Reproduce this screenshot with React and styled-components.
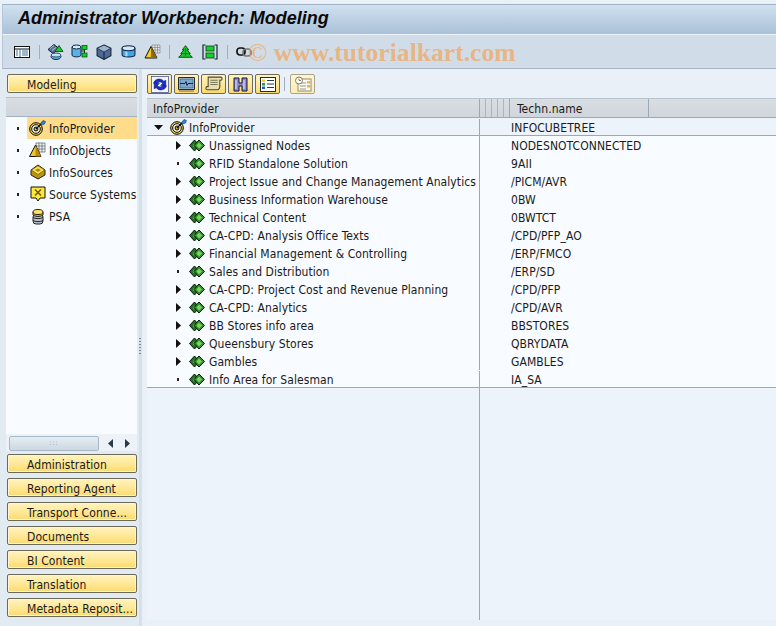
import React from 'react';
import styled, { createGlobalStyle } from 'styled-components';

const UI_FONT = '"DejaVu Sans Condensed", "Noto Sans", sans-serif';

const Global = createGlobalStyle`
  html, body { margin: 0; padding: 0; background: #e9f0f7; }
  body { font-family: ${UI_FONT}; overflow: hidden; letter-spacing: .07px; }
  * { box-sizing: border-box; }
`;

const Page = styled.div`
  position: relative; width: 776px; height: 626px; overflow: hidden;
  display: flex; flex-direction: column; padding-top: 4px; background: #e9f0f7;
`;
const TitleBar = styled.div`
  height: 31px; flex: none; display: flex; align-items: center; padding: 0 0 2px 15px;
  margin-left: 2px;
  border-top: 1px solid #9fb1c4; border-left: 1px solid #b6c6d6; border-bottom: 1px solid #eef4fa;
  background: linear-gradient(#d0e1ef, #aac1d9);
`;
const Title = styled.h1`
  margin: 0; font: italic bold 18px "Liberation Sans", Arial, sans-serif; letter-spacing: 0; color: #0a0a0a;
`;
const MainToolbar = styled.div`
  height: 34px; flex: none; display: flex; align-items: center; padding-left: 10px;
  margin-left: 2px; background: #d0dde8; border-bottom: 1px solid #a3b2c4; border-left: 1px solid #b6c6d6;
`;
const ToolSlot = styled.span`
  width: ${p => p.$w || 24}px; height: 18px; display: flex; align-items: center; justify-content: center; flex: none;
`;
const Sep = styled.span`
  width: 1px; height: 14px; background: #9fb0c2; flex: none;
  margin-left: ${p => p.$l}px; margin-right: ${p => p.$r}px;
`;
const Watermark = styled.div`
  position: absolute; left: 248px; top: 38px; font: bold 25.6px "Liberation Serif", serif; letter-spacing: 0;
  color: #e8b584; white-space: nowrap; pointer-events: none;
`;
const Thin = styled.span`
  font-weight: normal;
`;
const Body = styled.div`
  flex: 1; display: flex; min-height: 0;
`;
const Sidebar = styled.aside`
  width: 140px; flex: none; padding: 5px 3px 9px 7px; display: flex; flex-direction: column;
  background: #e3ebf2;
`;
const NavButton = styled.button`
  height: 19px; width: 130px; flex: none; border: 1px solid #6d6a58; border-radius: 2px; padding: 2px 0 0 19px; margin: 0;
  text-align: left; font: 12px ${UI_FONT}; letter-spacing: .07px; color: #1a1a1a; white-space: nowrap; overflow: hidden;
  background: linear-gradient(#fff3c0, #ffe68f 60%, #fbd971);
  box-shadow: inset 0 0 0 1px #fff6cf;
`;
const NavStack = styled.div`
  display: flex; flex-direction: column; gap: 5px; margin-top: 3px;
`;
const TreeHead = styled.div`
  height: 20px; margin: 4px 0 0 -1px; flex: none; background: linear-gradient(#d9dee3, #cfd5db);
  border-top: 1px solid #b9c3cd; border-bottom: 1px solid #a3b2c4;
`;
const NavTree = styled.ul`
  list-style: none; margin: 0 0 0 -1px; padding: 0; flex: 1; background: #f8fbff;
`;
const NavRow = styled.li`
  height: 22px; display: flex; align-items: center; position: relative; padding-left: 21px;
  font-size: 12px; color: #1a1a1a; white-space: nowrap;
`;
const NavSelect = styled.span`
  display: flex; align-items: center; flex: 1; min-width: 0; height: 22px; padding-left: 2px; gap: 3px;
  background: ${p => p.$on ? '#ffdc8a' : 'transparent'}; overflow: hidden;
`;
const NavIcon = styled.span`
  width: 17px; flex: none; display: flex; align-items: center; justify-content: center;
`;
const Label = styled.span`
  padding-top: 2px;
`;
const Bullet = styled.i`
  position: absolute; width: 2px; height: 3px; background: #222; left: 11px; top: 50%; margin-top: -1px;
`;
const HScroll = styled.div`
  height: 17px; flex: none; margin-left: -1px; display: flex; align-items: flex-end; background: #ecf2f8; padding-left: 3px;
`;
const Thumb = styled.div`
  width: 90px; height: 15px; border: 1px solid #a9b8c6; border-radius: 2px; display: flex; align-items: center; justify-content: center;
  background: linear-gradient(#e6edf3, #ccd8e2); color: #8a97a4; font-size: 7px; letter-spacing: 1px; line-height: 1;
`;
const ArrowBtn = styled.span`
  width: 16px; height: 15px; display: flex; align-items: center; justify-content: center; flex: none;
  &:first-of-type { margin-left: 4px; }
`;
const Splitter = styled.div`
  width: 8px; margin-left: -1px; flex: none; display: flex; align-items: center; background: linear-gradient(to right, #d6e0e9 0 3px, #e9f0f7 3px);
`;
const Grip = styled.div`
  width: 2px; height: 16px; margin-top: -4px; background: repeating-linear-gradient(#7d8b99 0 1px, transparent 1px 3px);
`;
const Content = styled.main`
  flex: 1; min-width: 0; display: flex; flex-direction: column; padding-top: 5px;
`;
const AppToolbar = styled.div`
  height: 20px; flex: none; display: flex; align-items: center; gap: 2px;
`;
const IconButton = styled.button`
  width: 25px; height: 20px; border: 1px solid ${p => p.$off ? '#a9a48e' : '#6d6a58'}; border-radius: 2px; padding: 0; margin: 0;
  display: flex; align-items: center; justify-content: center;
  background: ${p => p.$off ? 'linear-gradient(#fff5cf, #ffedb3)' : 'linear-gradient(#fff3c0, #ffe68f 60%, #fbd971)'};
`;
const Grid = styled.div`
  margin-top: 4px; flex: 1; display: flex; flex-direction: column; margin-bottom: 6px;
  background: linear-gradient(to right, transparent 332px, #9aa8b8 332px, #9aa8b8 333px, transparent 333px), #ecf3fb;
`;
const HeaderRow = styled.div`
  height: 20px; flex: none; display: flex; background: linear-gradient(#d9dee3, #cfd5db);
  border-top: 1px solid #b9c3cd; border-bottom: 1px solid #9aa8b8; font-size: 12px; color: #1a1a1a;
`;
const HeadName = styled.div`
  width: 333px; flex: none; padding: 1px 0 0 6px; line-height: 19px; border-right: 1px solid #9aa8b8;
`;
const HeadGrips = styled.div`
  width: 30px; flex: none; background: repeating-linear-gradient(to right, transparent 0 5px, #aab5c1 5px 6px);
  border-right: 1px solid #9aa8b8;
`;
const HeadTech = styled.div`
  width: 139px; flex: none; padding: 1px 0 0 7px; line-height: 19px; border-right: 1px solid #9aa8b8;
`;
const Row = styled.div`
  height: 18px; flex: none; display: flex; align-items: center; font-size: 12px; color: #1a1a1a; white-space: nowrap;
  background: ${p => p.$root ? '#ecf3fb' : '#f8fbff'};
  border-bottom: ${p => p.$line ? '1px solid #9aa8b8' : 'none'};
  padding-top: ${p => p.$line ? 1 : 0}px;
`;
const NameCell = styled.div`
  width: 333px; flex: none; height: 100%; display: flex; align-items: center;
  padding-left: ${p => p.$root ? 5 : 25}px; border-right: 1px solid #9aa8b8; overflow: hidden;
`;
const Expander = styled.span`
  width: 12px; flex: none; display: flex; align-items: center; justify-content: center;
  margin-right: ${p => p.$root ? 6 : 5}px;
`;
const TreeIcon = styled.span`
  flex: none; display: flex; align-items: center; margin-right: ${p => p.$root ? 2 : 4}px;
`;
const TechCell = styled.div`
  padding: 2px 0 0 31px;
`;

const Right = () => <svg width="5" height="9" viewBox="0 0 5 9"><path d="M0 0l5 4.500L0 9z" fill="#111" /></svg>;
const Down = () => <svg width="9" height="5" viewBox="0 0 9 5"><path d="M0 0h9L4.500 5z" fill="#111" /></svg>;
const Dot = () => <svg width="2" height="3"><rect width="2" height="3" fill="#222" /></svg>;

const Target = () => (
  <svg width="17" height="16" viewBox="0 0 17 16">
    <circle cx="7" cy="9" r="6.300" fill="#f5d84a" stroke="#000" />
    <circle cx="7" cy="9" r="4.300" fill="#fff" stroke="#000" />
    <circle cx="7" cy="9" r="2" fill="#e0b020" stroke="#000" />
    <path d="M7 9L13 3" stroke="#111" strokeWidth="1.300" />
    <path d="M11.500 3.500L14 .5l2.500 1-1 2.500-2.500 1z" fill="#2f7fe0" stroke="#133a78" strokeWidth=".6" />
  </svg>
);
const Diamonds = () => (
  <svg width="16" height="13" viewBox="0 0 16 13">
    <path d="M5.500 1l5 5.500-5 5.500-5-5.500z" fill="#1f6f1f" stroke="#041f04" />
    <path d="M3.500 6.500l2-2 1.500 2-2 2z" fill="#6cc455" />
    <path d="M10 1l5.500 5.500-5.500 5.500-5-5.500z" fill="#2f8f2a" stroke="#041f04" />
    <path d="M10 3.500l3 3-3 3-2.500-3z" fill="#7fd264" />
  </svg>
);
const InfoObj = () => (
  <svg width="17" height="16" viewBox="0 0 17 16">
    <path d="M7 1h9v9H7zM10 1v9M13 1v9M7 4h9M7 7h9" fill="#f3f3f3" stroke="#66707a" strokeWidth=".8" />
    <path d="M6.500 3L12 14.500H.5z" fill="#f4c820" stroke="#111" />
    <path d="M6.500 3L12 14.500H6.500z" fill="#b48a10" />
  </svg>
);
const InfoSrc = () => (
  <svg width="16" height="16" viewBox="0 0 16 16">
    <path d="M8 1l7 5v5l-7 4-7-4V6z" fill="#b8950e" stroke="#222" />
    <path d="M8 1.800L14.500 6 8 10.500 1.500 6z" fill="#ffe14d" stroke="#6b5a10" strokeWidth=".7" />
    <path d="M8 4.500L11 6 8 8 5 6z" fill="#a68a12" />
  </svg>
);
const SrcSys = () => (
  <svg width="16" height="16" viewBox="0 0 16 16">
    <path d="M1 1h14v11H10l-2 3-2-3H1z" fill="#ffe838" stroke="#111" />
    <path d="M5 3.500l6 6M11 3.500l-6 6" stroke="#6b5a10" strokeWidth="1.600" />
  </svg>
);
const Psa = () => (
  <svg width="16" height="17" viewBox="0 0 16 17">
    <rect x="3" y="6" width="10" height="10" rx="3" fill="#b9c2cc" stroke="#222" />
    <path d="M3 9.500c2 1.500 8 1.500 10 0M3 12.500c2 1.500 8 1.500 10 0" fill="none" stroke="#222" />
    <path d="M3 4v3c2 2 8 2 10 0V4" fill="#e0b820" stroke="#222" />
    <ellipse cx="8" cy="4" rx="5" ry="2.500" fill="#ffe560" stroke="#222" />
  </svg>
);
const TList = () => (
  <svg width="16" height="12" viewBox="0 0 16 12">
    <rect x=".5" y=".5" width="15" height="11" fill="#fff" stroke="#111" />
    <path d="M1 3h14" stroke="#111" />
    <path d="M6 3v8M8 5h6M8 7h6M8 9h6M2 5h2M2 7h2M2 9h2" stroke="#3a6f9f" />
  </svg>
);
const TCubeTree = () => (
  <svg width="18" height="18" viewBox="0 0 18 17">
    <path d="M1 6l6-5 5 4-6 5z" fill="#5b6f9a" stroke="#14233f" />
    <path d="M3 5l4-3M5 7l4-3" stroke="#c4d0e4" strokeWidth=".8" />
    <path d="M12 2l4 6H8z" fill="#1fc52f" stroke="#0a3d0a" strokeWidth=".8" />
    <ellipse cx="9" cy="13" rx="5" ry="3" fill="#58b2e6" stroke="#14233f" />
    <ellipse cx="9" cy="11.500" rx="5" ry="2" fill="#b8e2f6" stroke="#14233f" strokeWidth=".7" />
  </svg>
);
const TDbTree = () => (
  <svg width="18" height="15" viewBox="0 0 18 15">
    <path d="M1 3v8c0 2.500 9 2.500 9 0V3z" fill="#58b2e6" stroke="#14233f" />
    <ellipse cx="5.500" cy="3" rx="4.500" ry="2" fill="#cfeafa" stroke="#14233f" />
    <rect x="11" y="1.500" width="5" height="4" fill="#14d02c" stroke="#0a3d0a" strokeWidth=".7" />
    <rect x="11" y="9" width="5" height="4" fill="#14d02c" stroke="#0a3d0a" strokeWidth=".7" />
    <path d="M10 7h3.500M13.500 5.500v3.500" stroke="#0a3d0a" />
  </svg>
);
const TCube = () => (
  <svg width="16" height="16" viewBox="0 0 15 15">
    <path d="M7.500 1L14 4v7l-6.500 3.500L1 11V4z" fill="#4f6a92" stroke="#14233f" />
    <path d="M7.500 1L14 4 7.500 7.500 1 4z" fill="#9fb2ce" stroke="#14233f" strokeWidth=".7" />
    <path d="M7.500 7.500V14" stroke="#14233f" />
  </svg>
);
const TDb = () => (
  <svg width="15" height="13" viewBox="0 0 14 12">
    <path d="M1 3v6c0 2.800 12 2.800 12 0V3z" fill="#3fa6e6" stroke="#14233f" />
    <ellipse cx="7" cy="3" rx="6" ry="2.300" fill="#cfeafa" stroke="#14233f" />
    <path d="M5 6v4.500" stroke="#a8dcf5" strokeWidth="2" />
  </svg>
);
const TPyramid = () => (
  <svg width="17" height="15" viewBox="0 0 17 15">
    <path d="M8 1h8v8H8zM11 1v8M13.500 1v8M8 3.500h8M8 6h8" fill="#e8e8e8" stroke="#7b858f" strokeWidth=".7" />
    <path d="M7 2.500L13 14H1z" fill="#f4c820" stroke="#111" />
    <path d="M7 2.500L13 14H7z" fill="#8a6a10" />
  </svg>
);
const TTree = () => (
  <svg width="17" height="14" viewBox="0 0 16 13">
    <path d="M8 .5l3 4h-1.500l3 3.500H11l3.500 3.500h-13L5 8H3.500l3-3.500H5z" fill="#14c82c" stroke="#0a3d0a" strokeWidth=".8" />
    <path d="M8 3v7M6 8h4" stroke="#067a1a" />
  </svg>
);
const TBracket = () => (
  <svg width="16" height="16" viewBox="0 0 16 16">
    <path d="M3.500 1H1v14h2.500M12.500 1H15v14h-2.500" fill="none" stroke="#14233f" strokeWidth="1.200" />
    <rect x="4" y="2" width="8" height="5" fill="#14d02c" stroke="#0a3d0a" strokeWidth=".8" />
    <rect x="4" y="9" width="8" height="5" fill="#14d02c" stroke="#0a3d0a" strokeWidth=".8" />
  </svg>
);
const TLink = () => (
  <svg width="16" height="12" viewBox="0 0 16 12">
    <rect x="1" y="2" width="8" height="7" rx="3" fill="none" stroke="#111" strokeWidth="1.700" />
    <rect x="7" y="3" width="8" height="7" rx="3" fill="none" stroke="#777" strokeWidth="1.700" />
  </svg>
);
const ARefresh = () => (
  <svg width="18" height="17" viewBox="0 0 17 16">
    <rect x=".5" y=".5" width="16" height="15" fill="#f4f6fa" stroke="#3a4a9a" strokeWidth=".7" />
    <path d="M2.500 7c0-4 7-6 9.500-2l2-1v5H9l2-2C9 5 7 5.500 6 7z" fill="#1a2fc8" stroke="#0b1560" strokeWidth=".5" />
    <path d="M14.500 9c0 4-7 6-9.500 2l-2 1V7h5L6 9c2 2 4 1.500 5 0z" fill="#1a2fc8" stroke="#0b1560" strokeWidth=".5" />
  </svg>
);
const AMonitor = () => (
  <svg width="19" height="15" viewBox="0 0 17 15">
    <path d="M.5 .5h16v12H.5z" fill="#bcd0e2" stroke="#1c2a3a" />
    <rect x="2" y="2" width="13" height="9" fill="#7ea8cc" stroke="#2a4a6a" strokeWidth=".6" />
    <path d="M2 6.500h5l1-2 1 4 1-2h5" fill="none" stroke="#102a4a" />
    <path d="M1 14h15" stroke="#6a6a58" />
  </svg>
);
const AScroll = () => (
  <svg width="18" height="16" viewBox="0 0 17 15">
    <path d="M3 1h12c1.500 0 1.500 3 0 3h-1v6c0 1-1 3-2 3H2c-1.500 0-1.500-3 0-3h1z" fill="#e6e0b0" stroke="#4a4a30" />
    <path d="M5 4h7M5 6h7M5 8h7" stroke="#6a6a48" strokeWidth=".8" />
  </svg>
);
const ABinoc = () => (
  <svg width="17" height="15" viewBox="0 0 17 15">
    <path d="M2 1h5v5h3V1h5v13h-5V9H7v5H2z" fill="#8d8fc4" stroke="#14143f" />
    <path d="M4 3v9M12 3v9" stroke="#d8d8ee" strokeWidth="1.200" />
  </svg>
);
const ALegend = () => (
  <svg width="16" height="15" viewBox="0 0 16 15">
    <rect x=".5" y=".5" width="15" height="14" fill="#fff" stroke="#1c2a3a" />
    <rect x="2" y="2.500" width="3" height="2.500" fill="#f0d020" />
    <rect x="2" y="6" width="3" height="2.500" fill="#2a9a3a" />
    <rect x="2" y="9.500" width="3" height="2.500" fill="#2a5ac0" />
    <path d="M7 3.500h7M7 7h7M7 10.500h7" stroke="#2a3a4a" />
  </svg>
);
const AClock = () => (
  <svg width="18" height="16" viewBox="0 0 18 16" opacity=".75">
    <rect x="4" y="3" width="13" height="12" fill="#fff" stroke="#6a6a58" />
    <path d="M6 7h6M6 10h6M6 13h6" stroke="#777" />
    <rect x="13" y="5" width="3" height="2.500" fill="#e0a030" />
    <rect x="13" y="9" width="3" height="2.500" fill="#e0a030" />
    <circle cx="5" cy="4.500" r="3.500" fill="#fff" stroke="#555" />
    <path d="M5 2.500v2h2" fill="none" stroke="#555" />
  </svg>
);
const ScrollL = () => <svg width="6" height="9"><path d="M5 0v9L0 4.500z" fill="#2a3a4a" /></svg>;
const ScrollR = () => <svg width="6" height="9"><path d="M1 0v9l5-4.500z" fill="#2a3a4a" /></svg>;

const navTop = [
  { label: 'InfoProvider', Icon: Target, on: true },
  { label: 'InfoObjects', Icon: InfoObj },
  { label: 'InfoSources', Icon: InfoSrc },
  { label: 'Source Systems', Icon: SrcSys },
  { label: 'PSA', Icon: Psa },
];
const navBottom = ['Administration', 'Reporting Agent', 'Transport Conne...', 'Documents', 'BI Content', 'Translation', 'Metadata Reposit...'];
const rows = [
  ['Unassigned Nodes', 'NODESNOTCONNECTED', 1],
  ['RFID Standalone Solution', '9AII', 0],
  ['Project Issue and Change Management Analytics', '/PICM/AVR', 1],
  ['Business Information Warehouse', '0BW', 1],
  ['Technical Content', '0BWTCT', 1],
  ['CA-CPD: Analysis Office Texts', '/CPD/PFP_AO', 1],
  ['Financial Management & Controlling', '/ERP/FMCO', 1],
  ['Sales and Distribution', '/ERP/SD', 0],
  ['CA-CPD: Project Cost and Revenue Planning', '/CPD/PFP', 1],
  ['CA-CPD: Analytics', '/CPD/AVR', 1],
  ['BB Stores info area', 'BBSTORES', 1],
  ['Queensbury Stores', 'QBRYDATA', 1],
  ['Gambles', 'GAMBLES', 1],
  ['Info Area for Salesman', 'IA_SA', 0],
];

export default function App() {
  return (
    <Page>
      <Global />
      <TitleBar><Title>Administrator Workbench: Modeling</Title></TitleBar>
      <MainToolbar>
        <ToolSlot $w={17}><TList /></ToolSlot>
        <Sep $l={9} $r={4} />
        <ToolSlot><TCubeTree /></ToolSlot>
        <ToolSlot><TDbTree /></ToolSlot>
        <ToolSlot><TCube /></ToolSlot>
        <ToolSlot><TDb /></ToolSlot>
        <ToolSlot><TPyramid /></ToolSlot>
        <Sep $l={5} $r={3} />
        <ToolSlot><TTree /></ToolSlot>
        <ToolSlot $w={26}><TBracket /></ToolSlot>
        <Sep $l={4} $r={7} />
        <ToolSlot $w={18}><TLink /></ToolSlot>
      </MainToolbar>
      <Watermark><Thin>©</Thin> www.tutorialkart.com</Watermark>
      <Body>
        <Sidebar>
          <NavButton>Modeling</NavButton>
          <TreeHead />
          <NavTree>
            {navTop.map(({ label, Icon, on }) => (
              <NavRow key={label}>
                <Bullet />
                <NavSelect $on={on}><NavIcon><Icon /></NavIcon><Label>{label}</Label></NavSelect>
              </NavRow>
            ))}
          </NavTree>
          <HScroll>
            <Thumb>:::</Thumb>
            <ArrowBtn><ScrollL /></ArrowBtn>
            <ArrowBtn><ScrollR /></ArrowBtn>
          </HScroll>
          <NavStack>
            {navBottom.map(l => <NavButton key={l}>{l}</NavButton>)}
          </NavStack>
        </Sidebar>
        <Splitter><Grip /></Splitter>
        <Content>
          <AppToolbar>
            <IconButton><ARefresh /></IconButton>
            <IconButton><AMonitor /></IconButton>
            <IconButton><AScroll /></IconButton>
            <IconButton><ABinoc /></IconButton>
            <IconButton><ALegend /></IconButton>
            <Sep $l={2} $r={3} />
            <IconButton $off><AClock /></IconButton>
          </AppToolbar>
          <Grid>
            <HeaderRow>
              <HeadName>InfoProvider</HeadName>
              <HeadGrips />
              <HeadTech>Techn.name</HeadTech>
            </HeaderRow>
            <Row $root $line>
              <NameCell $root>
                <Expander $root><Down /></Expander>
                <TreeIcon $root><Target /></TreeIcon>
                <Label>InfoProvider</Label>
              </NameCell>
              <TechCell>INFOCUBETREE</TechCell>
            </Row>
            {rows.map(([name, tech, exp], i) => (
              <Row key={name} $line={i === rows.length - 1}>
                <NameCell>
                  <Expander>{exp ? <Right /> : <Dot />}</Expander>
                  <TreeIcon><Diamonds /></TreeIcon>
                  <Label>{name}</Label>
                </NameCell>
                <TechCell>{tech}</TechCell>
              </Row>
            ))}
          </Grid>
        </Content>
      </Body>
    </Page>
  );
}
